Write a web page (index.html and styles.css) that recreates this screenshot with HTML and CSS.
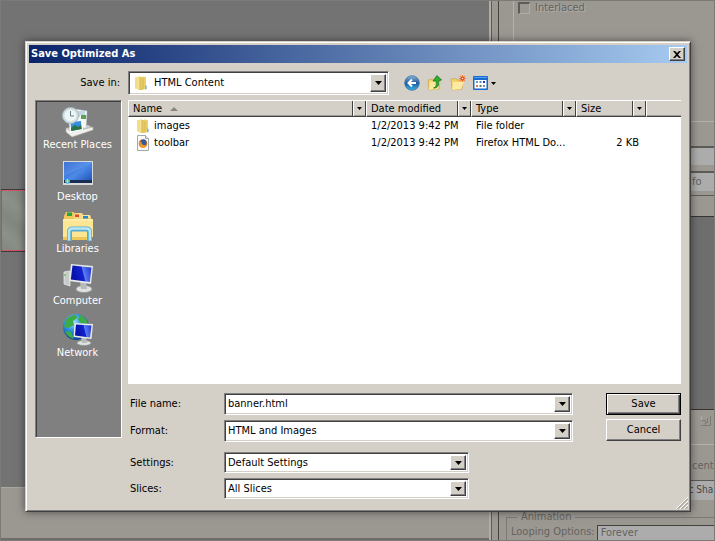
FILE: index.html
```html
<!DOCTYPE html>
<html lang="en">
<head>
<meta charset="utf-8">
<title>Save Optimized As</title>
<link rel="stylesheet" href="styles.css">
</head>
<body>
<svg class="defs" aria-hidden="true">
  <defs>
    <linearGradient id="gold" x1="0" x2="1"><stop offset="0" stop-color="#f8e9a0"/><stop offset="1" stop-color="#dcb94a"/></linearGradient>
    <linearGradient id="screen" x1="0" y1="0" x2="1" y2="1"><stop offset="0" stop-color="#2459c8"/><stop offset=".5" stop-color="#4d8ae8"/><stop offset="1" stop-color="#1b4cb4"/></linearGradient>
    <linearGradient id="monitor" x1="0" x2="1" y1=".2" y2="0"><stop offset="0" stop-color="#0712a8"/><stop offset=".5" stop-color="#1222d0"/><stop offset=".55" stop-color="#5b7cf0"/><stop offset="1" stop-color="#1a30d0"/></linearGradient>
    <radialGradient id="globe" cx=".4" cy=".3" r=".7"><stop offset="0" stop-color="#9fe0ff"/><stop offset=".5" stop-color="#2c8fe0"/><stop offset="1" stop-color="#0b3f94"/></radialGradient>
    <linearGradient id="back" x1="0" x2="0" y1="0" y2="1"><stop offset="0" stop-color="#8fb6da"/><stop offset=".5" stop-color="#1d5a9e"/><stop offset="1" stop-color="#35b4e8"/></linearGradient>
    <symbol id="folder" viewBox="0 0 16 16">
      <path d="M2 2.500 7 1v14l-5-1.500z" fill="#f3dd85"/><path d="M5 2h5v13H5z" fill="url(#gold)"/><path d="M9 1.500 13 2v12l-4 1z" fill="#ecd06a"/><path d="M7 2v13M10 3v11" stroke="#cfac45" stroke-width=".7"/><path d="M12.500 10l1 1v3l-1 .5z" fill="#4c9ad8"/>
    </symbol>
    <symbol id="arrow" viewBox="0 0 7 4"><path d="M0 0h7L3.500 4z"/></symbol>
  </defs>
</svg>
<div class="screen">
  <main class="app">
    <section class="workspace">
      <div class="canvas"><div class="slice"></div></div>
      <div class="status"></div>
    </section>
    <aside class="panels">
      <div class="optimize">
        <label class="check"><input type="checkbox" disabled>Interlaced</label>
      </div>
      <div class="strip"></div>
      <div class="field blank"></div>
      <div class="field info">fo</div>
      <div class="strip tabs"></div>
      <div class="strip tabs-end"></div>
      <div class="void"></div>
      <div class="tools"><svg width="12" height="12" viewBox="0 0 12 12" fill="none" stroke="#7c7a75"><path d="M1.500 5V1.500" stroke="#b5b2ac"/><path d="M10.500 1v9.500H1M1.500 5.500h4v4M7.500 3v4.500H5"/></svg></div>
      <div class="percent">cent</div>
      <div class="field sharp">ic Sha</div>
      <fieldset class="animation">
        <legend>Animation</legend>
        <div class="loop"><span>Looping Options:</span><span class="forever">Forever</span></div>
      </fieldset>
    </aside>
  </main>

  <div class="stage">
  <form class="dialog" role="dialog" aria-labelledby="title" onsubmit="return false">
    <header class="titlebar">
      <h1 id="title">Save Optimized As</h1>
      <button type="button" class="close" aria-label="Close"><svg width="8" height="7" viewBox="0 0 8 7"><path d="M0 0h2l2 2 2-2h2L5 3.500 8 7H6L4 5 2 7H0l3-3.500z"/></svg></button>
    </header>

    <div class="location">
      <label for="savein">Save in:</label>
      <div class="combo tall">
        <svg class="lead" width="16" height="16"><use href="#folder"/></svg>
        <select id="savein"><option>HTML Content</option></select>
        <span class="drop"><svg width="7" height="4"><use href="#arrow"/></svg></span>
      </div>
      <nav class="toolbar">
        <button type="button" aria-label="Back"><svg width="16" height="16" viewBox="0 0 16 16"><circle cx="8" cy="8" r="7.300" fill="url(#back)" stroke="#356a9e" stroke-width=".7"/><path d="M12 8H5M8 4.500 4.500 8 8 11.500" fill="none" stroke="#fff" stroke-width="2"/></svg></button>
        <button type="button" aria-label="Up one level"><svg width="16" height="16" viewBox="0 0 16 16"><path d="M1 5l5-1 1 1h6l-1 9-10 1z" fill="#f0d571" stroke="#c9a53e" stroke-width=".7"/><path d="M3 7h10l-2 7-9 1z" fill="#fae89a"/><path d="M6.500 13c3-1 3-3 2.600-7H6l4-5.500L14.500 5l-2.800.6c.5 5-1 7.500-5.200 7.400z" fill="#2fae31" stroke="#16751c" stroke-width=".8"/></svg></button>
        <button type="button" aria-label="Create new folder"><svg width="16" height="16" viewBox="0 0 16 16"><path d="M1 4l5-.5L7 5h6l-1 9-10 1z" fill="#f0d06a" stroke="#d0a640" stroke-width=".7"/><path d="M3 7h11l-3 7-9 1z" fill="#fdeaa3"/><path d="M12.500 0v7M9 3.500h7M10 1l5 5M15 1l-5 5" stroke="#f08a4a" stroke-width="1.200"/><circle cx="12.500" cy="3.500" r="2" fill="#e44a20"/><circle cx="12.500" cy="3.500" r=".8" fill="#fff3c0"/></svg></button>
        <button type="button" class="views" aria-label="Views"><svg width="15" height="14" viewBox="0 0 15 14"><rect width="15" height="14" rx="1" fill="#176bd0"/><path d="M1.500 4h12v8.500h-12z" fill="#fff"/><path d="M1 1.500h13" stroke="#55a0f0"/><path d="M3 5h2v2H3zM10 9h2v2h-2z" fill="#7b8eb6"/><path d="M6.500 5h2v2h-2z" fill="#4c91cc"/><path d="M10 5h2v2h-2z" fill="#243c9c"/><path d="M3 9h2v2H3z" fill="#e0773c"/><path d="M6.500 9h2v2h-2z" fill="#597d54"/></svg><svg width="5" height="3" viewBox="0 0 5 3"><path d="M0 0h5L2.500 3z"/></svg></button>
      </nav>
    </div>

    <div class="body">
      <nav class="places">
        <button type="button"><svg width="32" height="32" viewBox="0 0 32 32"><path d="M4 22l22-3 5 3-21 8z" fill="#c8cac8"/><path d="M4 22l6 4 21-5v3l-21 7-6-5z" fill="#f0f0ec" stroke="#a9aba8" stroke-width=".6"/><path d="M12 3l13 2-1 17-13-1z" fill="#f6f8f7" stroke="#c2cbd0" stroke-width=".5"/><path d="M15 6h8M15 8h8M15 10h3" stroke="#8fb5cc"/><path d="M19 9h5v4h-5z" fill="#56a34b"/><path d="M7 15l13-1 1 10-13 3z" fill="#fff"/><path d="M8.500 16l10.500-1 .7 8-10.500 2z" fill="#358ede"/><path d="M9 22l4-3 3 2 3-2 .7 4-10.500 2z" fill="#2c7440"/><circle cx="8.500" cy="9.500" r="8" fill="#d5e0e3" stroke="#a7b5ba"/><circle cx="8.500" cy="9.500" r="5.800" fill="#eef5f5"/><path d="M8.500 5v5H12" fill="none" stroke="#648091"/></svg>Recent Places</button>
        <button type="button"><svg width="32" height="32" viewBox="0 0 32 32"><path d="M1 3h30v24H1z" fill="#d8dadb"/><path d="M2 4h28v21H2z" fill="url(#screen)"/><path d="M2 22h28v3H2z" fill="#172d51"/><path d="M2 4h28v1L2 18z" fill="#7babf2" opacity=".3"/><circle cx="5.500" cy="23" r="2.600" fill="#39a4d3"/><path d="M5.500 21v4M3.500 23h4" stroke="#c9e463"/></svg>Desktop</button>
        <button type="button"><svg width="32" height="32" viewBox="0 0 32 32"><path d="M2 6l2-4h8l2 4h14l2 4v20H1z" fill="#eec758"/><path d="M5 2.500h5V6H5z" fill="#20a447"/><path d="M12 5l1-2h7l2 3v3H12z" fill="#f5d881"/><path d="M13 4.500h4V7h-4z" fill="#de4b2a"/><path d="M19 8l1-3h8l1 3z" fill="#f9e29b"/><path d="M21 6h5v2.500h-5z" fill="#2487d1"/><path d="M1 9h30v18H1z" fill="#fce694"/><path d="M2 10h28" stroke="#fff4c0"/><path d="M7.500 31V22q0-3 3-3h14q3 0 3 3v9" fill="none" stroke="#56acd2" stroke-width="5"/><path d="M7 30.500V22q0-3.500 3.500-3.500h14q3.500 0 3.500 3.500v8.500" fill="none" stroke="#b9e5f4" stroke-width="2.500"/></svg>Libraries</button>
        <button type="button"><svg width="32" height="32" viewBox="0 0 32 32"><path d="M2 10l6-1v15l-6-2z" fill="#c6cbc9" stroke="#eff1ef" stroke-width=".7"/><path d="M3 12v2" stroke="#3b3"/><ellipse cx="22" cy="27" rx="8" ry="3.500" fill="#dfe2e1" stroke="#929693" stroke-width=".7"/><path d="M18 20h6l1 7h-6z" fill="#b7bcbb"/><path d="M9 2l22 2-2 18-22-3z" fill="#e7eae8"/><path d="M10.500 3.500l19 2-1.700 14.500-19-2.500z" fill="url(#monitor)"/></svg>Computer</button>
        <button type="button"><svg width="32" height="32" viewBox="0 0 32 32"><circle cx="14" cy="13" r="13" fill="url(#globe)"/><path d="M4 6Q8 1 14 1l1 3-4 3 1 4-6 3-4-1zM18 1q7 3 8 9l-8-1-2-4zM3 17l6 1 3 7q-7-2-9-8z" fill="#3fab44"/><ellipse cx="22" cy="29" rx="7" ry="2.500" fill="#dfe2e1" stroke="#929693" stroke-width=".7"/><path d="M19 23h5l1 6h-5z" fill="#b7bcbb"/><path d="M12.500 9l18.500 1-1.500 15-18-2z" fill="#e7eae8"/><path d="M14 10.500l15.500 1-1.500 12-15-2z" fill="url(#monitor)"/></svg>Network</button>
      </nav>

      <div class="content">
        <div class="list">
          <table>
            <colgroup><col class="c-name"><col class="c-date"><col class="c-type"><col class="c-size"><col></colgroup>
            <thead><tr>
              <th><div class="head"><span>Name</span><svg class="sort" width="8" height="4" viewBox="0 0 8 4"><path d="M4 0l4 4H0z" fill="#88857f"/></svg><i><svg width="5" height="3"><use href="#arrow"/></svg></i></div></th>
              <th><div class="head"><span>Date modified</span><i><svg width="5" height="3"><use href="#arrow"/></svg></i></div></th>
              <th><div class="head"><span>Type</span><i><svg width="5" height="3"><use href="#arrow"/></svg></i></div></th>
              <th><div class="head"><span>Size</span><i><svg width="5" height="3"><use href="#arrow"/></svg></i></div></th>
              <th><div class="head last"></div></th>
            </tr></thead>
            <tbody>
              <tr><td><div class="file"><svg width="16" height="16"><use href="#folder"/></svg>images</div></td><td>1/2/2013 9:42 PM</td><td>File folder</td><td></td><td></td></tr>
              <tr><td><div class="file"><svg width="16" height="16" viewBox="0 0 16 16"><path d="M2.500.5h8l3 3v12h-11z" fill="#fafafa" stroke="#a3a8ad"/><path d="M10.500.5v3h3" fill="#dfe3e6" stroke="#a3a8ad"/><circle cx="8" cy="8.500" r="4.300" fill="#e2601c"/><circle cx="8.500" cy="7.500" r="2.900" fill="#2860a8"/><path d="M4 6q1 1.500 3 1.500l-.5 1.500 3 1.500q2 0 2-2.500 1 4-3 4.800Q4 12.500 4 6z" fill="#f49b26"/></svg>toolbar</div></td><td>1/2/2013 9:42 PM</td><td>Firefox HTML Do...</td><td class="num">2 KB</td><td></td></tr>
            </tbody>
          </table>
        </div>
        <div class="form">
          <div class="rows">
            <div class="row"><label for="fname">File name:</label><div class="combo"><input id="fname" type="text" value="banner.html"><span class="drop"><svg width="7" height="4"><use href="#arrow"/></svg></span></div></div>
            <div class="row"><label for="format">Format:</label><div class="combo"><select id="format"><option>HTML and Images</option></select><span class="drop"><svg width="7" height="4"><use href="#arrow"/></svg></span></div></div>
            <div class="row narrow first"><label for="settings">Settings:</label><div class="combo"><select id="settings"><option>Default Settings</option></select><span class="drop"><svg width="7" height="4"><use href="#arrow"/></svg></span></div></div>
            <div class="row narrow"><label for="slices">Slices:</label><div class="combo"><select id="slices"><option>All Slices</option></select><span class="drop"><svg width="7" height="4"><use href="#arrow"/></svg></span></div></div>
          </div>
          <div class="actions">
            <button type="submit" class="push default">Save</button>
            <button type="button" class="push">Cancel</button>
          </div>
        </div>
      </div>
    </div>
    <svg class="grip" width="12" height="12" viewBox="0 0 12 12"><path d="M0 12L12 0M4 12l8-8M8 12l4-4" stroke="#fff"/><path d="M1.500 12L12 1.500M5.500 12L12 5.500M9.500 12L12 9.500" stroke="#8a8781"/></svg>
  </form>
  </div>
</div>
</body>
</html>
```
FILE: styles.css
```css
* { box-sizing: border-box; }
body {
  margin: 0;
  font: 11px/14px "DejaVu Sans Condensed", "DejaVu Sans", sans-serif;
  color: #000;
}
button, input, select { font: inherit; color: inherit; margin: 0; padding: 0; }
svg { display: block; flex: none; }
.defs { position: absolute; width: 0; height: 0; }

.screen { display: grid; height: 100vh; min-height: 500px; overflow: hidden; }
.app, .stage { grid-area: 1 / 1; min-width: 0; min-height: 0; }

/* application behind the dialog */
.app {
  display: flex;
  background: #9b9892;
  border: 1px solid #7b7a77;
  color: #65635e;
  overflow: hidden;
}
.workspace {
  flex: 1;
  display: flex;
  flex-direction: column;
  border-right: 2px solid #b0ada7;
}
.canvas {
  flex: 1;
  display: flex;
  align-items: center;
  padding-bottom: 48px;
  background: #737373;
  border-bottom: 1px solid #aaa7a1;
}
.slice {
  width: 40px;
  height: 61px;
  border: 1px dotted #c4475a;
  border-left-style: solid;
  outline: 1px solid #3c3c3c;
  background: repeating-linear-gradient(40deg, #81867e 0, #8b9088 14px, #81867e 28px);
}
.status { height: 52px; border-bottom: 2px solid #6f6d69; }
.panels {
  flex: none;
  width: 223px;
  display: flex;
  flex-direction: column;
  padding-left: 7px;
  border-left: 1px solid #5d5b57;
  box-shadow: inset 6px 0 #9b9892, inset 7px 0 #45433f;
}
.optimize {
  height: 121px;
  margin-left: 14px;
  padding-left: 4px;
  border-left: 1px solid #b5b2ac;
  border-bottom: 1px solid #b5b2ac;
}
.check { display: flex; align-items: center; gap: 5px; text-shadow: 1px 1px #b2afa9; }
.check input {
  appearance: none;
  width: 12px;
  height: 12px;
  border: 1px solid #b0ada7;
  border-top: 2px solid #5d5b57;
  border-left: 2px solid #5d5b57;
}
.strip { height: 25px; border-bottom: 1px solid #5d5b57; }
.field { height: 20px; background: #acacad; padding: 2px 6px; border-top: 1px solid #5d5b57; }
.blank { height: 18px; margin-bottom: 6px; }
.info { padding-left: 193px; border-top-width: 2px; }
.tabs { height: 5px; border-color: #5d5b57; }
.tabs-end { height: 21px; border-top: 10px solid #9b9892; border-bottom: 1px solid #35342f; }
.void { flex: 1; background: #6e6e6e; border-bottom: 1px solid #35342f; }
.tools { height: 35px; padding: 5px 2px 0 0; display: flex; justify-content: flex-end; border-bottom: 1px solid #b5b2ac; }
.percent { height: 35px; padding: 14px 0 0 193px; }
.sharp { padding-left: 187px; padding-right: 0; font-size: 10px; white-space: nowrap; color: #484744; }
.animation {
  margin: 10px 0 0 7px;
  padding: 1px 0 0 4px;
  height: 30px;
  border: 1px solid #7c7a75;
  border-width: 1px 0 0 1px;
  min-width: 0;
}
.animation legend { padding: 0 4px; margin-left: 6px; }
.loop { display: flex; gap: 2px; white-space: nowrap; }
.forever { flex: 1; padding-left: 3px; background: #acacad; border: 1px solid #45433f; border-right: 0; }

/* dialog */
.stage { padding: 41px 24px 29px 25px; display: flex; }
.dialog {
  position: relative;
  flex: 1;
  min-width: 0;
  display: flex;
  flex-direction: column;
  padding: 2px;
  background: #d4d0c8;
  border: 1px solid #d4d0c8;
  border-right-color: #404040;
  border-bottom-color: #404040;
  box-shadow: inset 1px 1px #fff, inset -1px -1px #808080, 0 0 8px rgba(0, 0, 0, .5);
}
.titlebar {
  height: 18px;
  margin: 1px;
  padding: 0 2px 0 2px;
  display: flex;
  align-items: center;
  justify-content: space-between;
  background: linear-gradient(90deg, #0a246a, #a6caf0);
}
.titlebar h1 { margin: 0; font-size: 11px; font-weight: bold; color: #fff; }
.close, .push, .drop {
  display: flex;
  align-items: center;
  justify-content: center;
  background: #d4d0c8;
  border: 1px solid;
  border-color: #fff #404040 #404040 #fff;
  box-shadow: inset -1px -1px #808080;
}
.close { width: 16px; height: 14px; }
.location { display: flex; align-items: center; margin: 7px 6px 5px 7px; }
.location label { width: 93px; padding-right: 8px; text-align: right; }
.combo {
  display: flex;
  align-items: stretch;
  height: 22px;
  background: #fff;
  border: 1px solid;
  border-color: #808080 #fff #fff #808080;
  box-shadow: inset 1px 1px #404040, inset -1px -1px #d4d0c8;
  padding: 2px;
}
.combo input, .combo select {
  appearance: none;
  flex: 1;
  min-width: 0;
  width: 0;
  border: 0;
  outline: 0;
  padding-left: 1px;
  background: transparent;
}
.drop { width: 16px; pointer-events: none; }
.tall { width: 261px; height: 24px; }
.lead { margin: 1px 4px 0 2px; }
.toolbar { display: flex; align-items: center; gap: 7px; margin-left: 15px; }
.toolbar button { display: flex; align-items: center; background: none; border: 0; }
.toolbar .views { gap: 3px; }

.body { flex: 1; min-height: 0; display: flex; gap: 6px; margin: 0 7px 10px 7px; }
.places {
  flex: none;
  width: 87px;
  margin-bottom: 61px;
  padding: 5px 2px 0 0;
  background: #808080;
  border: 1px solid;
  border-color: #808080 #fff #fff #808080;
  box-shadow: inset 1px 1px #404040;
}
.places button {
  width: 100%;
  height: 52px;
  display: flex;
  flex-direction: column;
  align-items: center;
  background: none;
  border: 0;
  color: #fff;
  white-space: nowrap;
}
.content { flex: 1; min-width: 0; display: flex; flex-direction: column; gap: 9px; }
.list { flex: 1; background: #fff; overflow: hidden; }
table { width: 100%; border-collapse: collapse; table-layout: fixed; }
.c-name { width: 238px; }
.c-date { width: 105px; }
.c-type { width: 105px; }
.c-size { width: 70px; }
th { padding: 0; font-weight: normal; }
.head {
  height: 17px;
  display: flex;
  align-items: center;
  padding-left: 4px;
  background: #d4d0c8;
  border-top: 1px solid #fff;
  border-left: 1px solid #fff;
  border-bottom: 1px solid #404040;
  box-shadow: inset 0 -1px #a09d97;
}
.head i {
  display: flex;
  align-items: center;
  justify-content: center;
  align-self: stretch;
  width: 14px;
  margin-left: auto;
  border: 1px solid #404040;
  border-width: 0 1px;
  box-shadow: inset 1px 0 #fff;
}
.sort { margin-left: 8px; }
td { height: 17px; padding: 1px 5px 0; white-space: nowrap; }
td + td { padding-right: 0; }
.file { display: flex; align-items: center; gap: 3px; padding-left: 2px; }
td.num { text-align: right; padding-right: 7px; }

.form { display: flex; justify-content: space-between; gap: 33px; }
.rows { flex: 1; display: grid; gap: 5px; }
.row { display: flex; align-items: center; }
.row label { flex: none; width: 96px; padding-left: 2px; }
.row .combo { flex: 1; }
.narrow { padding-right: 104px; }
.narrow .combo { height: 21px; }
.first { margin-top: 5px; }
.actions { flex: none; width: 75px; display: flex; flex-direction: column; gap: 4px; }
.push { height: 22px; }
.default { outline: 1px solid #000; outline-offset: -1px; border-color: #000; box-shadow: inset 1px 1px #fff, inset -1px -1px #404040, inset -2px -2px #808080; }
.grip { position: absolute; right: 2px; bottom: 2px; }
```
